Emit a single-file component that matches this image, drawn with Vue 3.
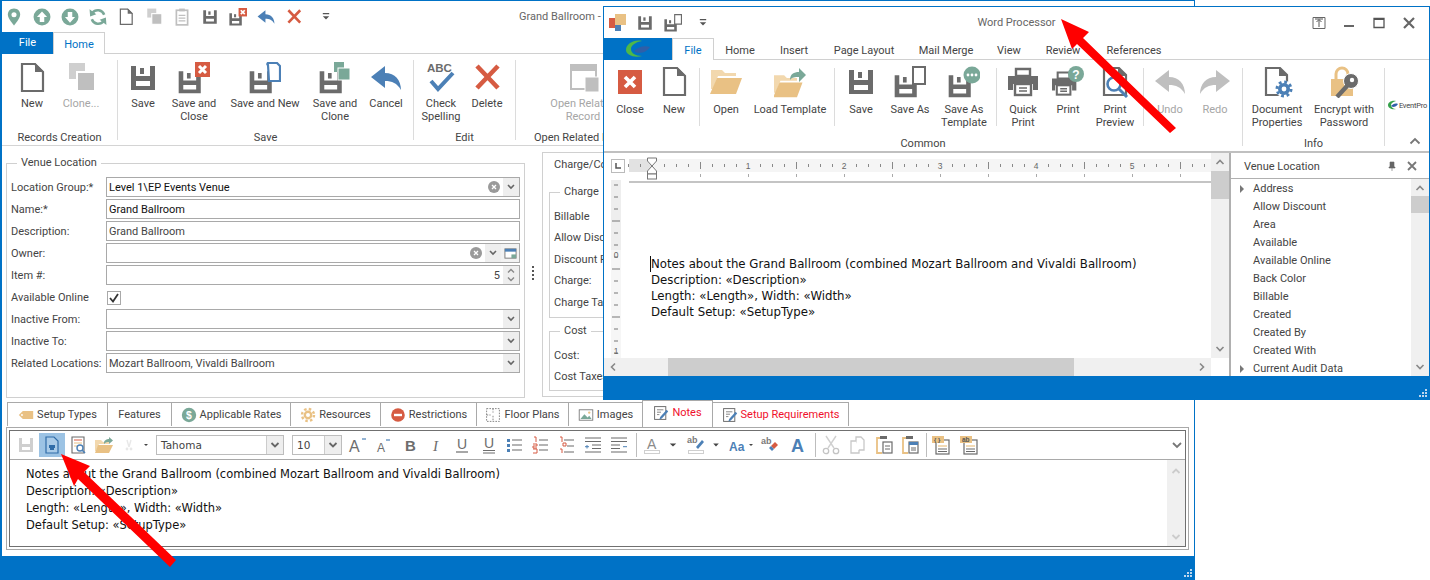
<script setup>
const G = '#6b6b6b', L = '#bfbfbf', B = '#4c80b6', R = '#d65b42', T = '#e9c184', S = '#7aa898'
const floppyBase = `<path fill="${G}" fill-rule="evenodd" d="M4 4h24v24H4z M9 4v10h14V4z M9 19v5h14v-5z"/><rect x="13" y="6" width="4" height="6" fill="${G}"/>`
const fl = (extra) => `<g transform="translate(-3,5.5) scale(.92)">${floppyBase}</g>${extra}`
const whiteX = (a, b, c, d, w = 3) => `<path d="M${a} ${b}L${c} ${d}M${c} ${b}L${a} ${d}" stroke="#fff" stroke-width="${w}"/>`
const undoPath = 'M1 15 L15 4 v7 C25 11 31 18 31 28 C27 21 22 19 15 19 v7z'
const printer = `<path d="M9 3h14v7H9z" fill="#fff" stroke="${G}" stroke-width="2.4"/><path d="M1 10h30v14h-5v-6H6v6H1z" fill="${G}"/><rect x="8" y="18" width="16" height="11" fill="#fff" stroke="${G}" stroke-width="2.4"/><path d="M12 22h8M12 25h8" stroke="${G}" stroke-width="1.6"/>`
const folder = `<path d="M1 4h11l3 3h11v3H8L3 23 H1z" fill="#f2d8ae"/><path d="M7 12h25l-6 16H0z" fill="${T}"/>`
const I = {
  pin: `<path d="M16 1C9 1 5 6 5 12c0 7 11 19 11 19s11-12 11-19c0-6-4-11-11-11z" fill="${S}"/><circle cx="16" cy="12" r="4.5" fill="#fff"/>`,
  up: `<circle cx="16" cy="16" r="15" fill="${S}"/><path d="M16 6l9 10h-5v9h-8v-9H7z" fill="#fff"/>`,
  down: `<circle cx="16" cy="16" r="15" fill="${S}"/><path d="M16 26l9-10h-5V7h-8v9H7z" fill="#fff"/>`,
  refresh: `<path d="M27 12A12 12 0 0 0 6 9M5 20a12 12 0 0 0 21 3" stroke="${S}" stroke-width="4.4" fill="none"/><path d="M1 2l1 13 11-4zM31 30l-1-13-11 4z" fill="${S}"/>`,
  doc: `<path d="M6 2h13l8 8v19H6z" fill="#fff" stroke="${G}" stroke-width="2.2"/><path d="M19 1l9 9h-9z" fill="${G}"/>`,
  clone: `<rect x="4" y="1" width="16" height="16" fill="#cfcfcf"/><rect x="12" y="10" width="18" height="19" fill="${L}" stroke="#fff" stroke-width="2"/>`,
  clip: `<rect x="6" y="4" width="20" height="26" fill="#fff" stroke="${L}" stroke-width="3"/><rect x="11" y="1" width="10" height="5" fill="${L}"/><path d="M10 13h12M10 18h12M10 23h12" stroke="${L}" stroke-width="2.4"/>`,
  save: floppyBase,
  saveClose: fl(`<rect x="17" y="0" width="15" height="15" fill="${R}"/>${whiteX(21, 4, 28, 11)}`),
  saveNew: fl(`<path d="M19 3a1 1 0 0 1 1-2h8l3 3v15H20z" fill="#fff" stroke="${B}" stroke-width="2.2"/>`),
  saveClone: fl(`<rect x="15" y="0" width="10" height="10" fill="${S}"/><rect x="19" y="6" width="12" height="12" fill="${S}" stroke="#fff"/>`),
  saveAs: fl(`<path d="M19 1h12v17H19z" fill="#fff" stroke="${G}" stroke-width="2"/>`),
  saveTpl: fl(`<circle cx="24" cy="9" r="8.5" fill="${S}"/><circle cx="20" cy="9" r="1.4" fill="#fff"/><circle cx="24" cy="9" r="1.4" fill="#fff"/><circle cx="28" cy="9" r="1.4" fill="#fff"/>`),
  cancel: `<path d="${undoPath}" fill="${B}"/>`,
  x: `<path d="M6 4L27 26M27 4L6 26" stroke="${R}" stroke-width="4.6"/>`,
  check: `<text x="2" y="10" font-size="11.5" font-weight="700" fill="${G}" font-family="Liberation Sans, sans-serif">ABC</text><path d="M6 19l7 8L28 11" stroke="${B}" stroke-width="4" fill="none"/>`,
  related: `<rect x="4" y="3" width="25" height="24" fill="#fff" stroke="${L}" stroke-width="2"/><rect x="4" y="3" width="25" height="6" fill="${L}"/><rect x="18" y="15" width="14" height="15" fill="${L}" stroke="#fff"/>`,
  close: `<rect x="4" y="4" width="24" height="24" fill="${R}"/>${whiteX(11, 11, 21, 21, 3.6)}`,
  open: folder,
  load: `<g transform="scale(.92) translate(-1,6)">${folder}</g><path d="M16 14c0-6 4-8 9-8V2l7 7-7 7v-5c-4 0-7 0-9 3z" fill="${S}"/>`,
  print: printer,
  printQ: `<g transform="translate(-2,4) scale(.85)">${printer}</g><circle cx="24" cy="8" r="8" fill="${S}"/><text x="24" y="12.5" text-anchor="middle" font-size="12" font-weight="700" fill="#fff" font-family="Liberation Sans, sans-serif">?</text>`,
  preview: `<path d="M5 2h15l7 7v20H5z" fill="#fff" stroke="${G}" stroke-width="2.2"/><path d="M19 1l9 9h-9z" fill="${G}"/><circle cx="15" cy="18" r="6.5" fill="#fff" stroke="${B}" stroke-width="2.6"/><path d="M20 23l8 8" stroke="${B}" stroke-width="3"/>`,
  undo: `<path d="${undoPath}" fill="${L}"/>`,
  redo: `<path d="${undoPath}" fill="${L}" transform="translate(32,0) scale(-1,1)"/>`,
  props: `<path d="M5 2h14l7 7v20H5z" fill="#fff" stroke="${G}" stroke-width="2.2"/><path d="M18 1l9 9h-9z" fill="${G}"/><circle cx="23" cy="23" r="8.5" fill="#fff"/><circle cx="23" cy="23" r="6" fill="${B}"/><circle cx="23" cy="23" r="7" fill="none" stroke="${B}" stroke-width="3" stroke-dasharray="2.8 2.7"/><circle cx="23" cy="23" r="2.4" fill="#fff"/>`,
  lock: `<path d="M8 14V8a6 6 0 0 1 12 0v6" stroke="${T}" stroke-width="3" fill="none"/><rect x="3" y="13" width="22" height="17" fill="${T}"/><circle cx="23" cy="15" r="7.5" fill="${G}" stroke="#fff"/><path d="M19 20L9 31" stroke="${G}" stroke-width="4.4"/><circle cx="24" cy="14" r="2.2" fill="#fff"/>`
}
const T20 = {
  save: `<path fill="#cfcfcf" fill-rule="evenodd" d="M3 3h14v14H3z M6 3v6h8V3z M6 12v3h8v-3z"/>`,
  printdoc: `<path d="M4 2h8l4 4v12H4z" fill="#a9cbe8" stroke="#2f6ca8" stroke-width="1.2"/><path d="M7 10h6v3H7z" fill="#2f6ca8"/><path d="M8 13h4v2H8z" fill="#2f6ca8"/>`,
  preview: `<path d="M4 2h12v16H4z" fill="#fff" stroke="${G}" stroke-width="1.1"/><path d="M6 5h8" stroke="${R}" stroke-width="1"/><path d="M6 8h8M6 11h3" stroke="${T}" stroke-width="1"/><circle cx="12" cy="13" r="3" fill="#fff" stroke="${B}" stroke-width="1.4"/><path d="M14 15l3 3" stroke="${B}" stroke-width="1.6"/>`,
  open: `<path d="M1 5h6l2 2h6v2H5L2 16H1z" fill="#f2d8ae"/><path d="M4 10h15l-4 8H1z" fill="${T}"/><path d="M10 8c0-3 3-4 5-4V2l4 3.5-4 3.5V7c-2 0-3 0-5 2z" fill="${S}"/>`,
  blank: `<path d="M8 5l2 7M12 5l-2 7" stroke="#e8e8e8" stroke-width="1.4"/><circle cx="8" cy="14" r="1.4" fill="#e8e8e8"/><circle cx="12" cy="14" r="1.4" fill="#e8e8e8"/>`,
  aup: `<text x="1" y="17" font-size="16" fill="#6d6d6d" font-family="Liberation Sans, sans-serif">A</text><path d="M14 4h4" stroke="${B}" stroke-width="1.2"/>`,
  adown: `<text x="3" y="17" font-size="12" fill="#6d6d6d" font-family="Liberation Sans, sans-serif">A</text><path d="M12 5h4" stroke="${B}" stroke-width="1.2"/>`,
  b: `<text x="5" y="16" font-size="15" font-weight="700" fill="#6d6d6d" font-family="Liberation Sans, sans-serif">B</text>`,
  i: `<text x="7" y="16" font-size="15" font-style="italic" fill="#6d6d6d" font-family="Liberation Serif, serif">I</text>`,
  u: `<text x="5" y="14" font-size="14" fill="#6d6d6d" font-family="Liberation Sans, sans-serif">U</text><path d="M4 17h12" stroke="#6d6d6d" stroke-width="1.2"/>`,
  uu: `<text x="5" y="13" font-size="14" fill="#6d6d6d" font-family="Liberation Sans, sans-serif">U</text><path d="M4 15.500h12M4 18h12" stroke="#6d6d6d" stroke-width="1"/>`,
  bul: `<path d="M7 5h10M7 10h10M7 15h10" stroke="${G}" stroke-width="1.2"/><rect x="2" y="4" width="3" height="3" fill="${B}"/><rect x="2" y="9" width="3" height="3" fill="${B}"/><rect x="2" y="14" width="3" height="3" fill="${B}"/>`,
  num: `<path d="M8 5h9M8 10h9M8 15h9" stroke="${G}" stroke-width="1.2"/><path d="M3 2h2v5M2 9h4v2H2v2h4M2 14h4v4H2" stroke="${R}" stroke-width="1" fill="none"/>`,
  multi: `<path d="M7 5h10M10 11h7M7 17h10" stroke="${G}" stroke-width="1.2"/><path d="M3 2h2v5M6 8h3v3H6zM3 14h2v4" stroke="${R}" stroke-width="1" fill="none"/>`,
  ind: `<path d="M2 3h16M2 6.500h16M9 10h9M9 13.500h9M2 17h16" stroke="${G}" stroke-width="1.1"/><path d="M2 11.700h4M4 10v3.500" stroke="${B}" stroke-width="1"/>`,
  out: `<path d="M2 3h16M2 6.500h16M2 10h9M2 13.500h9M2 17h16" stroke="${G}" stroke-width="1.1"/><path d="M14 11.700h4" stroke="${B}" stroke-width="1"/>`,
  ca: `<text x="5" y="14" font-size="14" fill="#8a8a8a" font-family="Liberation Sans, sans-serif">A</text><rect x="2.500" y="15.500" width="15" height="3" fill="#fff" stroke="#cfcfcf"/>`,
  hl: `<text x="1" y="8" font-size="9" font-weight="700" fill="#7a7a7a" font-family="Liberation Sans, sans-serif">ab</text><path d="M10 12l6-7 2 2-6 7z" fill="${B}"/><rect x="2.500" y="15.500" width="15" height="3" fill="#fff" stroke="#cfcfcf"/>`,
  aa: `<text x="1" y="16" font-size="12" font-weight="700" fill="${B}" font-family="Liberation Sans, sans-serif">Aa</text>`,
  clr: `<text x="1" y="9" font-size="9" font-weight="700" fill="#7a7a7a" font-family="Liberation Sans, sans-serif">ab</text><path d="M11 11l4-4 3 3-4 4z" fill="${R}"/><path d="M9 13l2-2 3 3-2 2z" fill="${B}"/>`,
  abig: `<text x="3" y="16.500" font-size="18" font-weight="700" fill="${B}" font-family="Liberation Sans, sans-serif">A</text>`,
  cut: `<path d="M5 1l8 12M15 1L7 13" stroke="#d0d0d0" stroke-width="1.4"/><circle cx="5" cy="16" r="2.700" fill="none" stroke="#c4c4c4" stroke-width="1.300"/><circle cx="15" cy="16" r="2.700" fill="none" stroke="#c4c4c4" stroke-width="1.300"/>`,
  copy: `<path d="M9 2h5l3 3v10H9z" fill="#fff" stroke="#c8c8c8" stroke-width="1.300"/><path d="M9 6H4v12h8v-3" fill="#fff" stroke="#c8c8c8" stroke-width="1.300"/>`,
  paste: `<path d="M6 3H3v15h5" fill="none" stroke="${T}" stroke-width="1.800"/><rect x="6" y="1" width="7" height="3" fill="${G}"/><rect x="9" y="7" width="9" height="11" fill="#fff" stroke="${G}" stroke-width="1.200"/><path d="M11 11h5M11 14h5" stroke="${G}"/>`,
  paste2: `<path d="M6 3H3v15h5" fill="none" stroke="${T}" stroke-width="1.800"/><rect x="6" y="1" width="7" height="3" fill="${G}"/><rect x="9" y="7" width="9" height="11" fill="#fff" stroke="${G}" stroke-width="1.200"/><rect x="9" y="7" width="9" height="3" fill="${B}"/><path d="M11 13h5M11 15h5" stroke="${G}"/>`,
  fld: `<rect x="5" y="5" width="13" height="14" fill="#fff" stroke="${G}" stroke-width="1.200"/><rect x="1" y="1" width="12" height="7" fill="${T}"/><text x="3" y="7" font-size="6" font-weight="700" fill="#555" font-family="Liberation Sans, sans-serif">{ }</text><path d="M7 11h9" stroke="${T}" stroke-width="1.200"/><path d="M7 14h9M7 16.500h9" stroke="${G}" stroke-width="1.200"/>`,
  fld2: `<rect x="5" y="5" width="13" height="14" fill="#fff" stroke="${G}" stroke-width="1.200"/><rect x="1" y="1" width="12" height="7" fill="${T}"/><text x="3" y="7" font-size="6.500" font-weight="700" fill="#555" font-family="Liberation Sans, sans-serif">ab</text><path d="M7 11h9" stroke="${T}" stroke-width="1.200"/><path d="M7 14h9M7 16.500h9" stroke="${G}" stroke-width="1.200"/>`,
  tag: `<path d="M1 10l5-5h13v10H6z" fill="${T}"/><circle cx="5" cy="10" r="1.200" fill="#fff"/>`,
  dollar: `<circle cx="10" cy="10" r="9" fill="${S}"/><text x="10" y="14.500" text-anchor="middle" font-size="13" font-weight="700" fill="#fff" font-family="Liberation Sans, sans-serif">$</text>`,
  gear: `<circle cx="10" cy="10" r="5.500" fill="${T}"/><circle cx="10" cy="10" r="7.500" fill="none" stroke="${T}" stroke-width="3" stroke-dasharray="3.100 2.800"/><circle cx="10" cy="10" r="2.500" fill="#fff"/>`,
  noentry: `<circle cx="10" cy="10" r="8.500" fill="${R}"/><rect x="5" y="8.500" width="10" height="3" fill="#fff"/>`,
  floor: `<path d="M2 2h16v16H2zM10 2v5M10 11v7M2 10h5" fill="none" stroke="${G}" stroke-width="1" stroke-dasharray="2 1.500"/>`,
  image: `<rect x="1.500" y="3.500" width="17" height="13" fill="#fff" stroke="${G}"/><path d="M3 15l5-6 4 4 2-2 3 4z" fill="${S}"/><circle cx="14" cy="7" r="1.500" fill="${T}"/>`,
  note: `<rect x="2" y="2" width="14" height="16" fill="#fff" stroke="${G}" stroke-width="1.200"/><path d="M5 6h8M5 9h5M5 12h3" stroke="${G}"/><path d="M9 15l8-9 2 2-8 9-3 1z" fill="${B}"/>`,
  dd: `<path d="M6 8h8l-4 4z" fill="#444"/>`
}
const mainGroups = [
  { w: 116, pl: 12, label: 'Records Creation', items: [
    { i: 'doc', w: 36, t: 'New' }, { i: 'clone', w: 62, t: 'Clone...', dis: true }] },
  { w: 296, pl: 5, label: 'Save', items: [
    { i: 'save', w: 40, t: 'Save' }, { i: 'saveClose', w: 62, t: 'Save and Close' }, { i: 'saveNew', w: 80, t: 'Save and New' },
    { i: 'saveClone', w: 60, t: 'Save and Clone' }, { i: 'cancel', w: 42, t: 'Cancel' }] },
  { w: 102, pl: 4, label: 'Edit', items: [{ i: 'check', w: 46, t: 'Check Spelling' }, { i: 'x', w: 46, t: 'Delete' }] },
  { w: 144, pl: 12, label: 'Open Related Records', items: [{ i: 'related', w: 110, t: 'Open Related Record', dis: true, narrow: true }] }
]
const commonGroups = [
  { w: 96, pl: 4, items: [{ i: 'close', w: 44, t: 'Close' }, { i: 'doc', w: 44, t: 'New' }] },
  { w: 135, pl: 5, items: [{ i: 'open', w: 42, t: 'Open' }, { i: 'load', w: 86, t: 'Load Template' }] },
  { w: 162, pl: 3, items: [{ i: 'save', w: 46, t: 'Save' }, { i: 'saveAs', w: 52, t: 'Save As' }, { i: 'saveTpl', w: 56, t: 'Save As Template' }] },
  { w: 147, pl: 3, items: [{ i: 'print', w: 46, t: 'Quick Print' }, { i: 'printQ', w: 44, t: 'Print' }, { i: 'preview', w: 50, t: 'Print Preview' }] },
  { w: 98, pl: 4, last: true, items: [{ i: 'undo', w: 44, t: 'Undo', dis: true }, { i: 'redo', w: 46, t: 'Redo', dis: true }] }
]
const infoItems = [{ i: 'props', w: 64, t: 'Document Properties' }, { i: 'lock', w: 70, t: 'Encrypt with Password' }]
const qatMain = ['pin', 'up', 'down', 'refresh', 'doc', 'clone', 'clip', 'save', 'saveClose', 'cancel', 'x']
const fields = [
  { l: 'Location Group:*', v: 'Level 1\\EP Events Venue', clear: 1, dd: 1, c: 'dark' },
  { l: 'Name:*', v: 'Grand Ballroom', c: 'dark' },
  { l: 'Description:', v: 'Grand Ballroom' },
  { l: 'Owner:', v: '', clear: 1, dd: 1, cal: 1 },
  { l: 'Item #:', v: '5', spin: 1, right: 1 },
  { l: 'Available Online', check: 1 },
  { l: 'Inactive From:', v: '', dd: 1 },
  { l: 'Inactive To:', v: '', dd: 1 },
  { l: 'Related Locations:', v: 'Mozart Ballroom, Vivaldi Ballroom', dd: 1 }
]
const tabs = [
  { t: 'Setup Types', w: 101, i: 'tag' }, { t: 'Features', w: 65 }, { t: 'Applicable Rates', w: 120, i: 'dollar' },
  { t: 'Resources', w: 91, i: 'gear' }, { t: 'Restrictions', w: 97, i: 'noentry' }, { t: 'Floor Plans', w: 93, i: 'floor' },
  { t: 'Images', w: 75, i: 'image' }, { t: 'Notes', w: 71, i: 'note', active: true, red: true },
  { t: 'Setup Requirements', w: 137, i: 'note', red: true }
]
const pitch = 26.1
const tools = [
  { i: 'save', w: 26 }, { i: 'printdoc', w: 26, active: true }, { i: 'preview', w: 26 }, { i: 'open', w: 26 }, { i: 'blank', w: 24 }, { i: 'dd', w: 10 },
  { sel: 'Tahoma', w: 128, ml: 5 }, { sel: '10', w: 50, ml: 8 },
  ...['aup', 'adown', 'b', 'i', 'u', 'uu', 'bul', 'num', 'multi', 'ind', 'out'].map((i, n) => ({ i, w: pitch, ml: n ? 0 : 3 })),
  { sep: 1, ml: 4 }, { i: 'ca', w: 26, ml: 2 }, { i: 'dd', w: 16 }, { i: 'hl', w: 26, ml: 2 }, { i: 'dd', w: 14 },
  { i: 'aa', w: 22, ml: 4 }, { i: 'dd', w: 10, ml: -3 }, { i: 'clr', w: 26, ml: 1 }, { i: 'abig', w: 26, ml: 2 },
  { sep: 1, ml: 4 }, { i: 'cut', w: 26, ml: 2 }, { i: 'copy', w: 26 }, { i: 'paste', w: 26, ml: 1 }, { i: 'paste2', w: 26 },
  { sep: 1, ml: 3 }, { i: 'fld', w: 26, ml: 1 }, { i: 'fld2', w: 26, ml: 2 }
]
const noteLines = ['Notes about the Grand Ballroom (combined Mozart Ballroom and Vivaldi Ballroom)', 'Description: «Description»', 'Length: «Length», Width: «Width»', 'Default Setup: «SetupType»']
const wordTabs = [['Home', 52], ['Insert', 56], ['Page Layout', 84], ['Mail Merge', 80], ['View', 46], ['Review', 62], ['References', 80]]
const venueList = [['Address', 1], ['Allow Discount'], ['Area'], ['Available'], ['Available Online'], ['Back Color'], ['Billable'], ['Created'], ['Created By'], ['Created With'], ['Current Audit Data', 1]]
const rulerTicks = Array.from({ length: 50 }, (_, i) => ({ x: 12 * i - 1, m: (i + 6) % 8 }))
const rulerNums = [1, 2, 3, 4, 5]
const vTicks = Array.from({ length: 15 }, (_, i) => 12 * i + 5)
</script>

<template>
  <div class="desk">
    <section class="win main">
      <header class="tbar">
        <div class="qat">
          <svg v-for="q in qatMain" :key="q" class="qi" viewBox="0 0 32 32" v-html="I[q]"></svg>
          <span class="qdd">
            <svg viewBox="0 0 20 20"><path d="M6 5h8v1.500H6zM6 9h8l-4 4z" fill="#555" /></svg>
          </span>
        </div>
        <span class="mtitle">Grand Ballroom - Venue Location</span>
      </header>
      <nav class="tabs">
        <span class="filetab">File</span>
        <span class="hometab">Home</span>
      </nav>
      <div class="ribbon">
        <div v-for="g in mainGroups" :key="g.label" class="rgroup" :style="{ width: g.w + 'px' }">
          <div class="rrow" :style="{ paddingLeft: g.pl + 'px' }">
            <div v-for="b in g.items" :key="b.t" class="rbtn" :class="{ dis: b.dis, narrow: b.narrow }" :style="{ width: b.w + 'px' }">
              <svg class="ri" viewBox="0 0 32 32" v-html="I[b.i]"></svg>
              <span class="rtxt">{{ b.t }}</span>
            </div>
          </div>
          <div class="rlabel">{{ g.label }}</div>
        </div>
      </div>

      <div class="body">
        <fieldset class="fs venue">
          <legend>Venue Location</legend>
          <div v-for="f in fields" :key="f.l" class="frow" :class="{ chk: f.check }">
            <label>{{ f.l }}</label>
            <span v-if="f.check" class="cb">
              <svg viewBox="0 0 12 12"><path d="M2 6l3 3.500L10 2" stroke="#333" stroke-width="1.800" fill="none" /></svg>
            </span>
            <div v-else class="inp" :class="[f.c, { right: f.right }]">
              <span class="val">{{ f.v }}</span>
              <svg v-if="f.clear" class="clr" viewBox="0 0 12 12"><circle cx="6" cy="6" r="6" fill="#9a9a9a" /><path d="M4 4l4 4M8 4l-4 4" stroke="#fff" stroke-width="1.300" /></svg>
              <span v-if="f.dd" class="ddb"><svg viewBox="0 0 10 10"><path d="M2 3l3 3 3-3" stroke="#666" stroke-width="1.600" fill="none" /></svg></span>
              <span v-if="f.cal" class="calb"><svg viewBox="0 0 14 14"><rect x="1" y="2" width="12" height="10" fill="#fff" stroke="#777" /><rect x="1" y="2" width="12" height="3" fill="#4c80b6" /><rect x="8" y="8" width="5" height="4" fill="#7aa898" /></svg></span>
              <span v-if="f.spin" class="spin">
                <svg viewBox="0 0 10 8"><path d="M2 6l3-3 3 3" stroke="#888" stroke-width="1.400" fill="none" /></svg>
                <svg viewBox="0 0 10 8"><path d="M2 2l3 3 3-3" stroke="#888" stroke-width="1.400" fill="none" /></svg>
              </span>
            </div>
          </div>
        </fieldset>
        <div class="dots"><i></i><i></i><i></i><i></i></div>
        <div class="chargebox">
          <div class="cctitle">Charge/Cost</div>
          <fieldset class="fs sub charge">
            <legend>Charge</legend>
            <div class="cl">Billable</div>
            <div class="cl">Allow Discount</div>
            <div class="cl">Discount Rate</div>
            <div class="cl">Charge:</div>
            <div class="cl">Charge Taxes</div>
          </fieldset>
          <fieldset class="fs sub cost">
            <legend>Cost</legend>
            <div class="cl">Cost:</div>
            <div class="cl">Cost Taxes</div>
          </fieldset>
        </div>
      </div>

      <div class="ptabs">
        <div v-for="t in tabs" :key="t.t" class="ptab" :class="{ active: t.active, red: t.red }" :style="{ width: t.w + 'px' }">
          <svg v-if="t.i" class="ti" viewBox="0 0 20 20" v-html="T20[t.i]"></svg>
          <span>{{ t.t }}</span>
        </div>
      </div>
      <div class="ppanel">
        <div class="pinner">
          <div class="toolbar">
            <template v-for="(x, n) in tools" :key="n">
              <span v-if="x.sep" class="tsep" :style="{ marginLeft: x.ml + 'px' }"></span>
              <div v-else-if="x.sel" class="tsel" :style="{ width: x.w + 'px', marginLeft: x.ml + 'px' }">
                <span class="tselv">{{ x.sel }}</span>
                <span class="tseld"><svg viewBox="0 0 10 10"><path d="M1.500 3l3.500 3.500L8.500 3" stroke="#666" stroke-width="1.800" fill="none" /></svg></span>
              </div>
              <span v-else class="tbtn" :class="{ on: x.active }" :style="{ width: x.w + 'px', marginLeft: (x.ml || 0) + 'px' }">
                <svg viewBox="0 0 20 20" v-html="T20[x.i]"></svg>
              </span>
            </template>
            <svg class="tmore" viewBox="0 0 10 10"><path d="M1 3l4 4 4-4" stroke="#777" stroke-width="1.800" fill="none" /></svg>
          </div>
          <div class="nbody">
            <div class="ntext">
              <div v-for="l in noteLines" :key="l">{{ l }}</div>
            </div>
            <div class="vs faint">
              <svg viewBox="0 0 10 10"><path d="M1.500 7L5 3.500 8.500 7" stroke="#ccc" stroke-width="1.800" fill="none" /></svg>
              <svg viewBox="0 0 10 10"><path d="M1.500 3L5 6.500 8.500 3" stroke="#ccc" stroke-width="1.800" fill="none" /></svg>
            </div>
          </div>
        </div>
      </div>
      <footer class="status">
        <svg class="grip" viewBox="0 0 10 10"><g fill="#bcd6ee"><rect x="7" y="1" width="2" height="2" /><rect x="4" y="4" width="2" height="2" /><rect x="7" y="4" width="2" height="2" /><rect x="1" y="7" width="2" height="2" /><rect x="4" y="7" width="2" height="2" /><rect x="7" y="7" width="2" height="2" /></g></svg>
      </footer>
    </section>

    <section class="win word">
      <header class="wbar">
        <div class="wqat">
          <svg class="wlogo" viewBox="0 0 20 20"><rect x="7" y="1" width="11" height="11" fill="#e9c184" /><rect x="1" y="5" width="6" height="10" fill="#d65b42" /><rect x="7" y="12" width="6" height="6" fill="#4c80b6" /></svg>
          <svg class="qi" viewBox="0 0 32 32" v-html="I.save"></svg>
          <svg class="qi" viewBox="0 0 32 32" v-html="I.saveAs"></svg>
          <span class="qdd"><svg viewBox="0 0 20 20"><path d="M6 5h8v1.500H6zM6 9h8l-4 4z" fill="#555" /></svg></span>
        </div>
        <span class="wtitle">Word Processor</span>
        <div class="wctl">
          <svg viewBox="0 0 14 14"><path d="M1 1.500h12v11H1z" fill="none" stroke="#666" /><path d="M7 11V4M4.500 6L7 3.500 9.500 6M3 3h8" stroke="#555" fill="none" /></svg>
          <svg viewBox="0 0 14 14"><path d="M2 10h10" stroke="#666" stroke-width="2" /></svg>
          <svg viewBox="0 0 14 14"><path d="M2 2.500h10v9H2z" fill="none" stroke="#555" stroke-width="1.300" /><path d="M2 3h10" stroke="#555" stroke-width="2" /></svg>
          <svg viewBox="0 0 14 14"><path d="M2 2l10 10M12 2L2 12" stroke="#666" stroke-width="2.200" /></svg>
        </div>
      </header>
      <nav class="wtabs">
        <span class="wbrand">
          <svg viewBox="0 0 26 18"><path d="M17 1C9-1 1 4 1 10c0 5 8 8 16 6-7 0-11-3-11-7 0-4 5-7 11-8z" fill="#4fb848" /><path d="M9 11c4-4 10-6 16-4-2 3-6 6-11 6-2 0-4-1-5-2z" fill="#2f5fa8" /></svg>
        </span>
        <span class="wfile">File</span>
        <span v-for="t in wordTabs" :key="t[0]" class="wtab" :style="{ width: t[1] + 'px' }">{{ t[0] }}</span>
      </nav>
      <div class="wribbon">
        <div class="wcommon">
          <div class="wsubs">
            <div v-for="(g, n) in commonGroups" :key="n" class="wsub" :class="{ last: g.last }" :style="{ width: g.w + 'px', paddingLeft: g.pl + 'px' }">
              <div v-for="b in g.items" :key="b.t" class="rbtn" :class="{ dis: b.dis }" :style="{ width: b.w + 'px' }">
                <svg class="ri" viewBox="0 0 32 32" v-html="I[b.i]"></svg>
                <span class="rtxt">{{ b.t }}</span>
              </div>
            </div>
          </div>
          <div class="rlabel wl">Common</div>
        </div>
        <div class="winfo">
          <div class="wsubs pad">
            <div v-for="b in infoItems" :key="b.t" class="rbtn" :style="{ width: b.w + 'px' }">
              <svg class="ri" viewBox="0 0 32 32" v-html="I[b.i]"></svg>
              <span class="rtxt">{{ b.t }}</span>
            </div>
          </div>
          <div class="rlabel wl">Info</div>
        </div>
        <div class="wep">
          <div class="eplogo">
            <svg viewBox="0 0 12 10"><path d="M9 1C4 0 1 3 1 5c0 3 4 5 8 4-3 0-5-2-5-4s2-3 5-4z" fill="#35a24a" /><path d="M4 6c2-2 4-3 7-2-1 2-3 3-5 3z" fill="#2f5fa8" /></svg>
            <span>EventPro</span>
          </div>
          <svg class="collapse" viewBox="0 0 12 8"><path d="M1.500 6.500L6 2l4.500 4.500" stroke="#777" stroke-width="1.800" fill="none" /></svg>
        </div>
      </div>
      <div class="wbody">
        <div class="ed">
          <div class="edtop">
            <div class="edleft">
              <div class="rulerrow">
                <span class="corner"><svg viewBox="0 0 12 12"><path d="M4 3v5h5" stroke="#555" stroke-width="1.500" fill="none" /></svg></span>
                <svg class="ruler" viewBox="0 0 582 22">
                  <rect x="0" y="2" width="582" height="13" fill="#f5f5f5" />
                  <rect x="0" y="2" width="23" height="13" fill="#e2e2e2" />
                  <path d="M0 25h582" stroke="#c4c4c4" stroke-width="2" />
                  <template v-for="(t, n) in rulerTicks" :key="n">
                    <path v-if="t.m === 4" :d="`M${t.x + 0.5} 5v7`" stroke="#888" />
                    <path v-else-if="t.m !== 0" :d="`M${t.x + 0.5} 7v3`" stroke="#888" />
                  </template>
                  <text v-for="r in rulerNums" :key="r" :x="23 + r * 96" y="12" text-anchor="middle" class="rnum">{{ r }}</text>
                  <path v-for="k in 11" :key="'b' + k" :d="`M${23.5 + k * 48} 17v3`" stroke="#aaa" />
                  <path d="M18.500 1h9v3l-4.500 5-4.500-5z" fill="#fff" stroke="#777" />
                  <path d="M23 9l4.500 5v3h-9v-3z" fill="#fff" stroke="#777" />
                  <rect x="18.500" y="17" width="9" height="5" fill="#fff" stroke="#777" />
                </svg>
              </div>
              <div class="edmain">
                <svg class="vruler" viewBox="0 0 10 178">
                  <rect width="10" height="178" fill="#eeeeee" />
                  <rect x="0" y="70" width="10" height="108" fill="#f6f6f6" />
                  <path v-for="(t, n) in vTicks" :key="n" :d="n % 4 === 3 ? `M1 ${t}h8` : `M3 ${t}h4`" stroke="#777" />
                  <text x="5" y="78" text-anchor="middle" class="rnum">0</text>
                  <text x="5" y="174" text-anchor="middle" class="rnum">1</text>
                </svg>
                <div class="page">
                  <div v-for="(l, n) in noteLines" :key="l" class="pline" :class="{ caret: n === 0 }">{{ l }}</div>
                </div>
              </div>
            </div>
            <div class="vs">
              <svg viewBox="0 0 10 10"><path d="M1.500 7L5 3.500 8.500 7" stroke="#888" stroke-width="1.600" fill="none" /></svg>
              <span class="thumb tv"></span>
              <svg class="end" viewBox="0 0 10 10"><path d="M1.500 3L5 6.500 8.500 3" stroke="#888" stroke-width="1.600" fill="none" /></svg>
            </div>
          </div>
          <div class="hs">
            <svg viewBox="0 0 10 10"><path d="M7 1.500L3.500 5 7 8.500" stroke="#888" stroke-width="1.600" fill="none" /></svg>
            <span class="thumb th"></span>
            <svg class="end" viewBox="0 0 10 10"><path d="M3 1.500L6.500 5 3 8.500" stroke="#888" stroke-width="1.600" fill="none" /></svg>
          </div>
        </div>
        <aside class="panel">
          <div class="phead">
            <span>Venue Location</span>
            <svg class="pin" viewBox="0 0 10 10"><path d="M3 1h4v5h1v1H2V6h1zM5 7v3" fill="#666" stroke="#666" stroke-width=".6" /></svg>
            <svg class="px" viewBox="0 0 10 10"><path d="M1 1l8 8M9 1L1 9" stroke="#777" stroke-width="1.800" /></svg>
          </div>
          <div class="plist">
            <ul>
              <li v-for="v in venueList" :key="v[0]">
                <svg v-if="v[1]" viewBox="0 0 6 8"><path d="M1 0l4 4-4 4z" fill="#777" /></svg>
                <span>{{ v[0] }}</span>
              </li>
            </ul>
            <div class="vs pvs">
              <svg viewBox="0 0 10 10"><path d="M1.500 7L5 3.500 8.500 7" stroke="#888" stroke-width="1.600" fill="none" /></svg>
              <span class="thumb tp"></span>
              <svg class="end" viewBox="0 0 10 10"><path d="M1.500 3L5 6.500 8.500 3" stroke="#888" stroke-width="1.600" fill="none" /></svg>
            </div>
          </div>
        </aside>
      </div>
      <footer class="wstatus">
        <svg class="grip" viewBox="0 0 10 10"><g fill="#bcd6ee"><rect x="7" y="1" width="2" height="2" /><rect x="4" y="4" width="2" height="2" /><rect x="7" y="4" width="2" height="2" /><rect x="1" y="7" width="2" height="2" /><rect x="4" y="7" width="2" height="2" /><rect x="7" y="7" width="2" height="2" /></g></svg>
      </footer>
    </section>

    <svg class="arrows" viewBox="0 0 1430 580">
      <path d="M61 454 L90 466 L84 472 L176 560 L170 567 L78 479 L74 486 Z" fill="#f00" />
      <path d="M1061 19 L1089 32 L1083 38 L1176 128 L1170 133 L1077 44 L1072 49 Z" fill="#f00" />
    </svg>
  </div>
</template>

<style>
html, body { margin: 0; background: #fff; }
</style>

<style scoped>
.desk { position: relative; width: 1430px; height: 580px; overflow: hidden; background: #fff; font-family: Roboto, "Noto Sans", sans-serif; font-size: 11px; color: #444; }
.win { position: absolute; box-sizing: border-box; background: #fff; display: flex; flex-direction: column; }
.main { left: 0; top: 0; width: 1195px; height: 580px; border: 1px solid #0072c6; border-left-width: 2px; }
.word { left: 603px; top: 6px; width: 827px; height: 394px; border: 1px solid #0072c6; z-index: 2; }
.tbar { height: 31px; display: flex; align-items: center; flex: none; }
.qat { display: flex; align-items: center; padding-left: 3px; width: 517px; box-sizing: border-box; flex: none; }
.qi { width: 18px; height: 18px; margin-right: 10px; flex: none; }
.qdd { width: 16px; height: 16px; margin-left: 5px; }
.qdd svg { width: 16px; height: 16px; display: block; }
.mtitle { color: #666; white-space: nowrap; width: 84px; overflow: hidden; }
.tabs { height: 22px; display: flex; border-bottom: 1px solid #d0d0d0; flex: none; box-sizing: border-box; }
.filetab { width: 51px; background: #0072c6; color: #fff; text-align: center; line-height: 21px; height: 22px; }
.hometab { width: 52px; height: 22px; border: 1px solid #d0d0d0; border-bottom: 0; background: #fff; box-sizing: border-box; color: #0072c6; text-align: center; line-height: 23px; }
.ribbon { height: 92px; width: 602px; overflow: hidden; display: flex; flex: none; border-bottom: 1px solid #d4d4d4; box-sizing: border-box; }
.rgroup { height: 80px; margin-top: 6px; display: flex; flex-direction: column; box-sizing: border-box; border-right: 1px solid #dcdcdc; flex: none; }
.rgroup:last-child { border-right: 0; }
.rrow { display: flex; flex: 1; min-height: 0; }
.rbtn { display: flex; flex-direction: column; align-items: center; flex: none; }
.ri { width: 32px; height: 32px; margin-top: 2px; flex: none; }
.rtxt { text-align: center; line-height: 13px; margin-top: 2.5px; color: #444; }
.narrow .rtxt { padding: 0 17px; }
.dis .rtxt { color: #a6a6a6; }
.rlabel { text-align: center; line-height: 14px; height: 14px; padding-bottom: 2px; margin-bottom: -7px; color: #444; white-space: nowrap; flex: none; }
.body { height: 253px; display: flex; flex: none; padding-left: 4px; box-sizing: border-box; }
.fs { border: 1px solid #d0d0d0; margin: 0; min-width: 0; box-sizing: border-box; }
.fs legend { margin-left: 6px; padding: 0 4px; line-height: 14px; color: #444; }
.venue { width: 519px; height: 242px; margin-top: 10px; padding: 7px 4px 0; display: flex; flex-direction: column; gap: 2px; flex: none; }
.frow { display: flex; height: 20px; align-items: center; }
.frow.chk { height: 19px; padding-top: 1px; }
.frow label { width: 95px; flex: none; white-space: nowrap; }
.inp { flex: 1; height: 20px; border: 1px solid #a9a9a9; box-sizing: border-box; display: flex; align-items: center; padding-left: 2px; color: #444; }
.inp.dark { color: #111; }
.inp.right .val { text-align: right; padding-right: 3px; }
.val { flex: 1; white-space: nowrap; }
.clr { width: 12px; height: 12px; margin-right: 3px; flex: none; }
.ddb { width: 16px; height: 18px; background: #eee; display: flex; align-items: center; justify-content: center; flex: none; }
.ddb svg { width: 10px; height: 10px; }
.calb { width: 18px; height: 18px; display: flex; align-items: center; justify-content: center; background: #f2f2f2; flex: none; }
.calb svg { width: 13px; height: 13px; }
.spin { width: 16px; height: 18px; background: #eee; display: flex; flex-direction: column; align-items: center; flex: none; }
.spin svg { width: 10px; height: 9px; }
.cb { width: 12px; height: 12px; border: 1px solid #a9a9a9; display: block; margin-left: 1px; }
.cb svg { width: 12px; height: 12px; display: block; }
.dots { width: 12px; margin-left: 2px; margin-right: 3px; display: flex; flex-direction: column; gap: 2px; align-items: center; justify-content: center; flex: none; }
.dots i { width: 2px; height: 2px; background: #555; display: block; }
.chargebox { width: 61px; height: 245px; margin-top: 6px; border: 1px solid #d0d0d0; border-right: 0; box-sizing: border-box; padding: 4px 0 0 6px; flex: none; overflow: hidden; white-space: nowrap; }
.cctitle { line-height: 14px; padding-left: 5px; margin-top: 1px; }
.sub { margin-top: 13px; padding: 0 4px; width: 100px; }
.charge { height: 133px; padding-top: 10.5px; }
.cost { margin-top: 6px; height: 67px; padding-top: 10.5px; }
.cl { height: 21.5px; line-height: 14px; }
.ptabs { height: 28px; display: flex; align-items: flex-end; padding-left: 5px; flex: none; margin-top: 0; position: relative; z-index: 1; }
.ptab { height: 24px; margin-bottom: 1px; border: 1px solid #a9a9a9; border-bottom: 0; box-sizing: border-box; display: flex; align-items: center; justify-content: center; gap: 3px; margin-left: -1px; background: #fff; white-space: nowrap; color: #444; }
.ptab:first-child { margin-left: 0; }
.ptab.active { height: 27px; margin-bottom: 0; padding-bottom: 3px; }
.ptab.red { color: #f0102c; }
.ti { width: 16px; height: 16px; flex: none; }
.ppanel { margin-left: 4px; width: 1183px; height: 123px; border: 1px solid #a9a9a9; box-sizing: border-box; padding: 2px; flex: none; }
.pinner { height: 100%; border: 1px solid #707070; box-sizing: border-box; display: flex; flex-direction: column; }
.toolbar { height: 29px; flex: none; display: flex; align-items: center; padding-left: 3px; border-bottom: 1px solid #a9a9a9; box-sizing: border-box; }
.tbtn { height: 24px; display: flex; align-items: center; justify-content: center; flex: none; }
.tbtn svg { width: 20px; height: 20px; }
.tbtn.on { background: #9cc3e4; }
.tsep { width: 1px; height: 24px; background: #bdbdbd; flex: none; }
.tsel { height: 20px; border: 1px solid #bdbdbd; box-sizing: border-box; display: flex; flex: none; color: #444; }
.tselv { flex: 1; padding-left: 4px; line-height: 18px; font-family: "DejaVu Sans", sans-serif; font-size: 10.5px; }
.tseld { width: 16px; background: #eee; border-left: 1px solid #ccc; display: flex; align-items: center; justify-content: center; }
.tseld svg { width: 10px; height: 10px; }
.tmore { width: 10px; height: 10px; margin-left: auto; margin-right: 3px; }
.nbody { flex: 1; display: flex; min-height: 0; }
.ntext { flex: 1; padding: 6px 0 0 16px; font-family: "DejaVu Sans", sans-serif; font-size: 11.47px; line-height: 17px; color: #111; white-space: nowrap; }
.vs { width: 18px; background: #f0f0f0; display: flex; flex-direction: column; align-items: center; flex: none; position: relative; }
.vs svg { width: 10px; height: 10px; flex: none; margin-top: 4px; }
.vs .end { margin-top: auto; margin-bottom: 4px; }
.vs.faint { justify-content: space-between; padding: 2px 0 4px; box-sizing: border-box; }
.status, .wstatus { background: #0072c6; flex: 1; position: relative; display: flex; justify-content: flex-end; align-items: flex-end; margin-top: 6px; }
.wstatus { margin-top: 0; }
.grip { width: 10px; height: 10px; margin: 0 1px 1px 0; }
.wbar { height: 31px; display: grid; grid-template-columns: 1fr auto 1fr; align-items: center; flex: none; }
.wqat { display: flex; align-items: center; padding-left: 4px; }
.wlogo { width: 20px; height: 20px; margin-right: 8px; }
.wqat .qdd { margin-left: 3px; }
.wtitle { color: #666; white-space: nowrap; }
.wctl { display: flex; justify-content: flex-end; gap: 16px; padding-right: 13px; }
.wctl svg { width: 14px; height: 14px; }
.wtabs { height: 22px; display: flex; flex: none; border-bottom: 1px solid #d0d0d0; box-sizing: border-box; }
.wbrand { width: 68px; height: 22px; background: #0072c6; display: flex; align-items: center; justify-content: center; }
.wbrand svg { width: 26px; height: 18px; }
.wfile { width: 42px; height: 22px; border: 1px solid #d0d0d0; border-bottom: 0; background: #fff; box-sizing: border-box; color: #0072c6; text-align: center; line-height: 24px; }
.wtab { text-align: center; line-height: 25px; color: #444; }
.wribbon { height: 93px; display: flex; flex: none; border-bottom: 2px solid #c0c0c0; box-sizing: border-box; }
.wribbon .rtxt { margin-top: 5px; }
.wcommon { width: 638px; display: flex; flex-direction: column; }
.wsubs { display: flex; height: 62px; padding-top: 4px; box-sizing: content-box; }
.wsub { display: flex; box-sizing: border-box; height: 62px; position: relative; flex: none; }
.wsub::after { content: ""; position: absolute; right: 0; top: 4px; width: 1px; height: 58px; background: #dcdcdc; }
.wsub.last::after { display: none; }
.wsubs.pad { padding-left: 2px; }
.rlabel.wl { margin-top: auto; padding-bottom: 0; margin-bottom: 0; }
.winfo { width: 143px; box-sizing: border-box; margin-top: 8px; height: 78px; border-left: 1px solid #dcdcdc; border-right: 1px solid #dcdcdc; display: flex; flex-direction: column; }
.winfo .wsubs { padding-top: 0; margin-top: -4px; }
.winfo .rlabel.wl { margin-bottom: -5px; }
.wep { flex: 1; display: flex; flex-direction: column; align-items: center; position: relative; }
.eplogo { display: flex; align-items: center; margin-top: 40px; font-size: 7.5px; letter-spacing: -0.2px; color: #444; white-space: nowrap; }
.eplogo svg { width: 12px; height: 10px; }
.collapse { width: 12px; height: 8px; margin-top: auto; margin-bottom: 6px; margin-left: 16px; }
.wbody { height: 223px; display: flex; flex: none; }
.ed { width: 625px; display: flex; flex-direction: column; flex: none; }
.edtop { flex: 1; display: flex; min-height: 0; }
.edleft { flex: 1; display: flex; flex-direction: column; min-width: 0; }
.rulerrow { height: 27px; display: flex; align-items: flex-start; flex: none; padding-top: 4px; box-sizing: border-box; }
.corner { width: 12px; height: 12px; margin: 2px 0 0 7px; border: 1px solid #bbb; flex: none; display: block; }
.corner svg { width: 12px; height: 12px; display: block; }
.ruler { width: 582px; height: 22px; margin-left: 4px; flex: none; overflow: visible; }
.rnum { font-size: 8.5px; fill: #666; font-family: "Liberation Sans", sans-serif; }
.edmain { flex: 1; display: flex; min-height: 0; }
.vruler { width: 10px; height: 178px; margin-left: 7px; flex: none; }
.page { flex: 1; padding: 76px 0 0 30px; font-family: "DejaVu Sans", sans-serif; font-size: 11.76px; line-height: 16px; color: #111; white-space: nowrap; overflow: hidden; }
.pline.caret { box-shadow: -1px 0 0 #111; width: fit-content; }
.thumb { display: block; background: #cdcdcd; flex: none; }
.tv { width: 18px; height: 28px; margin-top: 4px; }
.hs { height: 18px; background: #f0f0f0; display: flex; align-items: center; flex: none; margin-right: 18px; position: relative; }
.hs svg { width: 10px; height: 10px; flex: none; margin-left: 4px; }
.hs .end { margin-left: auto; margin-right: 4px; }
.th { height: 18px; width: 406px; margin-left: 50px; }
.panel { flex: 1; border-left: 2px solid #b0b0b0; display: flex; flex-direction: column; min-width: 0; }
.phead { height: 26px; flex: none; display: flex; align-items: center; padding: 1px 0 0 13px; border-bottom: 1px solid #b0b0b0; box-sizing: border-box; color: #444; }
.phead span { flex: 1; }
.pin { width: 10px; height: 10px; margin-right: 10px; }
.px { width: 10px; height: 10px; margin-right: 12px; }
.plist { flex: 1; display: flex; min-height: 0; overflow: hidden; }
ul { list-style: none; margin: 0; padding: 1px 0 0; flex: 1; }
li { height: 18px; line-height: 18px; padding-left: 22px; position: relative; white-space: nowrap; color: #444; }
li svg { position: absolute; left: 8px; top: 5px; width: 6px; height: 8px; }
.tp { width: 18px; height: 17px; margin-top: 3px; }
.arrows { position: absolute; left: 0; top: 0; width: 1430px; height: 580px; z-index: 5; pointer-events: none; }
</style>
